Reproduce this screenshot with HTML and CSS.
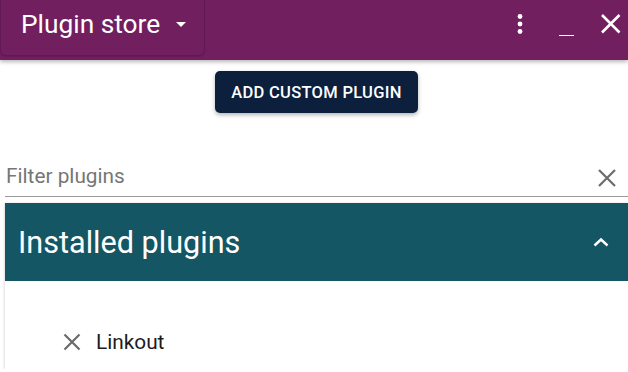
FILE: index.html
```html
<!DOCTYPE html>
<html>
<head>
<meta charset="utf-8">
<link rel="stylesheet" href="styles.css">
</head>
<body>
<header class="topbar">
  <div class="store-select">
    <span class="store-title">Plugin store</span>
    <span class="caret"></span>
  </div>
  <div class="top-actions">
    <svg class="icon-dots" width="24" height="24" viewBox="0 0 24 24"><circle cx="12" cy="4.5" r="2.4" fill="#fff"/><circle cx="12" cy="12" r="2.4" fill="#fff"/><circle cx="12" cy="19.5" r="2.4" fill="#fff"/></svg>
    <svg class="icon-min" width="24" height="24" viewBox="0 0 24 24"><rect x="4" y="23" width="15" height="2.4" fill="#fff"/></svg>
    <svg class="icon-close" width="24" height="24" viewBox="0 0 24 24"><path d="M4 3 L21.5 20.5 M21.5 3 L4 20.5" stroke="#fff" stroke-width="2.6" fill="none"/></svg>
  </div>
</header>
<main class="content">
  <div class="btn-row">
    <button class="add-btn">ADD CUSTOM PLUGIN</button>
  </div>
  <div class="filter">
    <span class="filter-placeholder">Filter plugins</span>
    <svg class="filter-clear" width="20" height="20" viewBox="0 0 20 20"><path d="M2 2 L18 18 M18 2 L2 18" stroke="#6b6b6b" stroke-width="2.2" fill="none"/></svg>
  </div>
  <section class="panel">
    <div class="panel-head">
      <span class="panel-title">Installed plugins</span>
      <svg class="chev" width="16" height="10" viewBox="0 0 16 10"><path d="M1.5 8.5 L8 2.5 L14.5 8.5" stroke="#fff" stroke-width="2.4" fill="none"/></svg>
    </div>
    <div class="panel-body">
      <div class="plugin-item">
        <svg class="item-x" width="18" height="18" viewBox="0 0 18 18"><path d="M1.5 1.5 L16.5 16.5 M16.5 1.5 L1.5 16.5" stroke="#6b6b6b" stroke-width="2.2" fill="none"/></svg>
        <span class="item-name">Linkout</span>
      </div>
    </div>
  </section>
</main>
</body>
</html>
```
FILE: styles.css
```css
html, body {
  margin: 0;
  padding: 0;
  background: #ffffff;
  font-family: Roboto, "Liberation Sans", sans-serif;
  overflow: hidden;
}

.topbar {
  height: 60px;
  background: #711f5f;
  display: flex;
  align-items: flex-start;
  justify-content: space-between;
  box-shadow: 0 2px 4px rgba(0,0,0,0.28);
  position: relative;
  z-index: 2;
}

.store-select {
  width: 205px;
  height: 56px;
  box-sizing: border-box;
  border: 1px solid rgba(0,0,0,0.14);
  border-top: none;
  border-radius: 0 0 6px 6px;
  box-shadow: 0 1px 2px rgba(0,0,0,0.12);
  display: flex;
  align-items: center;
  padding-left: 20px;
  padding-bottom: 8px;
}

.store-title {
  color: #ffffff;
  font-size: 26.3px;
  line-height: 30px;
}

.caret {
  width: 0;
  height: 0;
  border-left: 5.5px solid transparent;
  border-right: 5.5px solid transparent;
  border-top: 5.5px solid #ffffff;
  margin-left: 16px;
  margin-top: 2px;
}

.top-actions {
  display: flex;
  align-items: center;
  padding-top: 12px;
  padding-right: 6px;
}

.icon-dots { margin-right: 23px; }
.icon-min { margin-right: 19px; }

.content {
  padding-left: 5px;
}

.btn-row {
  display: flex;
  justify-content: center;
  padding-top: 11px;
}

.add-btn {
  height: 42px;
  width: 203px;
  background: #0c1f3d;
  color: #ffffff;
  border: none;
  border-radius: 5px;
  font-family: Roboto, "Liberation Sans", sans-serif;
  font-size: 16.5px;
  font-weight: 500;
  letter-spacing: 0.3px;
  box-shadow: 0 2px 4px rgba(0,0,0,0.3);
  padding: 0;
}

.filter {
  margin-top: 47px;
  height: 36px;
  border-bottom: 1px solid #9a9a9a;
  display: flex;
  align-items: center;
  justify-content: space-between;
  padding-left: 1px;
  padding-right: 11px;
}

.filter-placeholder {
  color: #767676;
  font-size: 20.8px;
  line-height: 24px;
  margin-top: -5px;
}

.panel {
  margin-top: 6px;
  box-shadow: -1px 0 2px rgba(0,0,0,0.12);
}

.panel-head {
  height: 78px;
  background: #145663;
  display: flex;
  align-items: center;
  justify-content: space-between;
  padding-left: 13px;
  padding-right: 19px;
}

.panel-title {
  color: #ffffff;
  font-size: 30.6px;
}

.panel-body {
  padding: 42px 0 8px 58px;
}

.plugin-item {
  display: flex;
  align-items: center;
  height: 38px;
}

.item-x {
  margin-right: 15px;
}

.item-name {
  font-size: 20.8px;
  color: #1c1c1c;
}
```
